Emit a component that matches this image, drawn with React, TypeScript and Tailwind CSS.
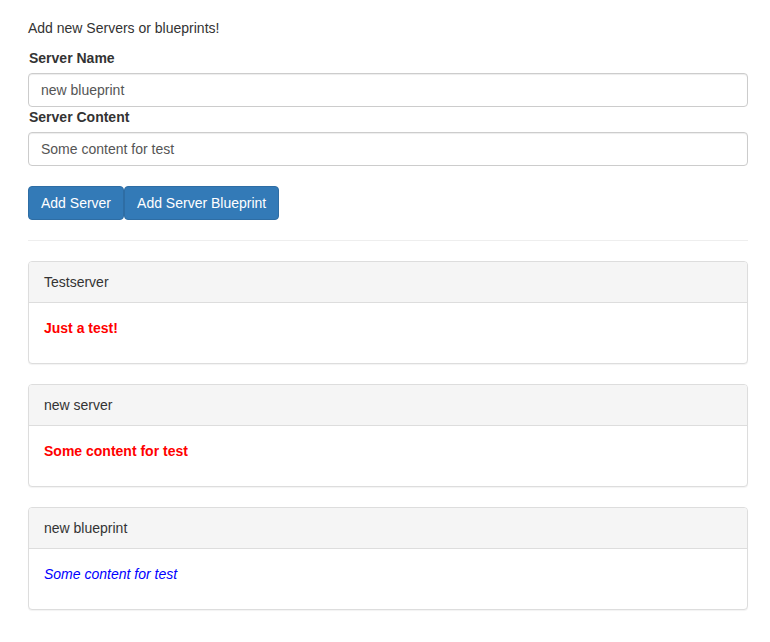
import { useState } from 'react';

type Server = { name: string; content: string; kind: 'server' | 'blueprint' };

const initial: Server[] = [
  { name: 'Testserver', content: 'Just a test!', kind: 'server' },
  { name: 'new server', content: 'Some content for test', kind: 'server' },
  { name: 'new blueprint', content: 'Some content for test', kind: 'blueprint' },
];

export default function App() {
  const [name, setName] = useState('new blueprint');
  const [content, setContent] = useState('Some content for test');
  const [servers, setServers] = useState<Server[]>(initial);

  const add = (kind: Server['kind']) => setServers([...servers, { name, content, kind }]);

  return (
    <div className="min-h-screen bg-white pl-[28px] pr-[22px] pt-[18px] text-[14px] leading-[20px] text-[#333] font-['Liberation_Sans',Arial,sans-serif]">
      <p className="mb-[10px]">Add new Servers or blueprints!</p>

      {/* Form */}
      <label className="mb-[5px] block pl-px font-bold">Server Name</label>
      <input
        value={name}
        onChange={(e) => setName(e.target.value)}
        className="block h-[34px] w-full rounded-[4px] border border-[#ccc] bg-white px-3 py-[6px] text-[#555] shadow-[inset_0_1px_1px_rgba(0,0,0,0.075)] outline-none"
      />
      <label className="mb-[5px] block pl-px font-bold">Server Content</label>
      <input
        value={content}
        onChange={(e) => setContent(e.target.value)}
        className="block h-[34px] w-full rounded-[4px] border border-[#ccc] bg-white px-3 py-[6px] text-[#555] shadow-[inset_0_1px_1px_rgba(0,0,0,0.075)] outline-none"
      />

      <div className="mt-5 flex">
        <button
          onClick={() => add('server')}
          className="h-[34px] rounded-[4px] border border-[#2e6da4] bg-[#337ab7] px-3 text-white"
        >
          Add Server
        </button>
        <button
          onClick={() => add('blueprint')}
          className="h-[34px] rounded-[4px] border border-[#2e6da4] bg-[#337ab7] px-3 text-white"
        >
          Add Server Blueprint
        </button>
      </div>

      <hr className="my-5 border-t border-[#eee]" />

      {/* Server list */}
      {servers.map((s, i) => (
        <div key={i} className="mb-5 rounded-[4px] border border-[#ddd] bg-white shadow-[0_1px_1px_rgba(0,0,0,0.05)]">
          <div className="rounded-t-[3px] border-b border-[#ddd] bg-[#f5f5f5] px-[15px] py-[10px]">{s.name}</div>
          <div className="p-[15px]">
            {s.kind === 'server' ? (
              <p className="mb-[10px] font-bold text-[#ff0000]">{s.content}</p>
            ) : (
              <p className="mb-[10px] italic text-[#0000ff]">{s.content}</p>
            )}
          </div>
        </div>
      ))}
    </div>
  );
}
